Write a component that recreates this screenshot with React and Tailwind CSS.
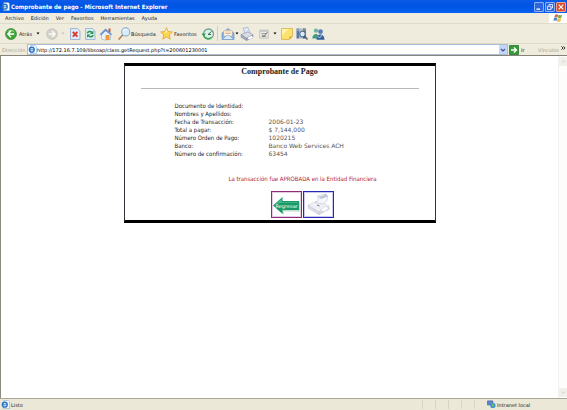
import React from "react";

const MENU = ["Archivo", "Edición", "Ver", "Favoritos", "Herramientas", "Ayuda"];

const ROWS = [
  ["Documento de Identidad:", ""],
  ["Nombres y Apellidos:", ""],
  ["Fecha de Transacción:", "2006-01-23"],
  ["Total a pagar:", "$ 7,144,000"],
  ["Número Orden de Pago:", "1020215"],
  ["Banco:", "Banco Web Services ACH"],
  ["Número de confirmación:", "63454"],
];

function Icon({ children, className = "size-[14px]", box = "0 0 14 14" }) {
  return (
    <svg viewBox={box} className={"shrink-0 " + className} aria-hidden="true">
      {children}
    </svg>
  );
}

function Caret({ className = "text-black" }) {
  return (
    <Icon className={"h-[3px] w-[4px] " + className} box="0 0 4 3">
      <path d="M.5.500h3L2 2.400z" fill="currentColor" />
    </Icon>
  );
}

function IePage({ className = "size-[9px]" }) {
  return (
    <Icon className={className} box="0 0 10 10">
      <path d="M3 .5h5L9.500 2v7.500H3z" fill="#f4f9ff" stroke="#7da3cf" strokeWidth=".6" />
      <circle cx="4.200" cy="5.200" r="2.700" fill="none" stroke="#2675c4" strokeWidth="1.500" />
      <path d="M2 5.300h4.800" stroke="#2675c4" strokeWidth="1" />
    </Icon>
  );
}

function BackIcon() {
  return (
    <Icon className="size-[12px]">
      <circle cx="7" cy="7" r="6.400" fill="#3da535" stroke="#2a7f26" strokeWidth=".7" />
      <path d="M2.500 5A5 5 0 0 1 11.500 5 9 9 0 0 0 2.500 5" fill="#8fd47f" />
      <path d="M7 3.300 3.400 7 7 10.700M3.800 7h7" fill="none" stroke="#fff" strokeWidth="1.700" />
    </Icon>
  );
}

function ForwardIcon() {
  return (
    <Icon className="size-[12px]">
      <circle cx="7" cy="7" r="6.200" fill="#d3d3cb" stroke="#b9b9b0" strokeWidth=".8" />
      <path d="M7 3.500 10.500 7 7 10.500M10 7H3.300" fill="none" stroke="#fbfbf8" strokeWidth="1.700" />
    </Icon>
  );
}

function StopIcon() {
  return (
    <Icon>
      <path d="M2.500 1.500h7l2.500 2.500v8.500H2.500z" fill="#dbe9fa" stroke="#8fa9cf" strokeWidth=".8" />
      <path d="m4.800 4.800 4.600 4.800m0-4.800L4.800 9.600" stroke="#dd3a25" strokeWidth="1.900" />
    </Icon>
  );
}

function RefreshIcon() {
  return (
    <Icon>
      <path d="M2.500 1.500h7l2.500 2.500v8.500H2.500z" fill="#dcedf5" stroke="#8fadcb" strokeWidth=".8" />
      <path d="M4.300 6.300C5 4.300 7.500 4 8.700 5.300" fill="none" stroke="#249548" strokeWidth="1.500" />
      <path d="M10.400 3.600v3.500H7z" fill="#249548" />
      <path d="M10.200 8c-.6 2-3.200 2.400-4.400 1" fill="none" stroke="#249548" strokeWidth="1.500" />
      <path d="M4 10.800V7.400h3.500z" fill="#249548" />
    </Icon>
  );
}

function HomeIcon() {
  return (
    <Icon>
      <path d="M9.500 1.500h2v4h-2z" fill="#c25d35" />
      <path d="M2.500 7 6 3.500 11.500 7v5.500l-6 .5-3-1z" fill="#e9f1fc" stroke="#819fcb" strokeWidth=".5" />
      <path d="M.8 7.200 6.500 1.600l6.700 5.600-1.300 1L6.700 4 2 8.400z" fill="#6a93cf" />
      <path d="M6.500 8h4v5h-4z" fill="#ee9b36" />
    </Icon>
  );
}

function SearchIcon() {
  return (
    <Icon className="size-[13px]">
      <path d="M5.500 8 1.200 13" stroke="#b98150" strokeWidth="1.700" strokeLinecap="round" />
      <circle cx="8.300" cy="5.300" r="4.400" fill="#d5ecfb" stroke="#84abc9" strokeWidth="1.100" />
      <path d="M5.800 4.800C6.300 3 8 2.300 9.500 2.800" fill="none" stroke="#fff" strokeWidth="1.100" />
    </Icon>
  );
}

function StarIcon() {
  return (
    <Icon className="size-[13px]">
      <path
        d="m7 .7 1.900 4.200 4.500.4-3.400 3.100 1 4.700L7 10.700l-4 2.400 1-4.700L.6 5.300l4.500-.4z"
        fill="#fcd650"
        stroke="#d79b25"
        strokeWidth=".7"
      />
      <path d="m7 2.500 1 3-3 1z" fill="#fff3b0" />
    </Icon>
  );
}

function HistoryIcon() {
  return (
    <Icon>
      <circle cx="7.500" cy="7" r="5" fill="#dcefea" stroke="#6aa98c" strokeWidth="1.300" />
      <path d="M7 7.500 10.500 4.500M7 7.500h3" fill="none" stroke="#35704e" strokeWidth="1" />
      <path d="M.5 6.500h4.300L2.700 9.500z" fill="#2c9b4a" />
      <path d="M2.700 8.500c1 3.300 5 4.200 7.600 2" fill="none" stroke="#3ba456" strokeWidth="1.500" />
    </Icon>
  );
}

function MailIcon() {
  return (
    <Icon>
      <path d="M1 6 7 1.500 13 6v6.500H1z" fill="#8bb4e2" stroke="#6288ba" strokeWidth=".6" />
      <path d="M3 3.500h8V9H3z" fill="#fffaf0" stroke="#d0b489" strokeWidth=".5" />
      <path d="M4.300 5h5.500M4.300 6.500h5.500" stroke="#df9b5b" strokeWidth=".7" />
      <path d="m1 12.500 5-4.200h2l5 4.200z" fill="#dceafa" stroke="#6b94c7" strokeWidth=".6" />
    </Icon>
  );
}

function PrintIcon() {
  return (
    <Icon>
      <path d="m3 1 5-.5 2 5-5 1z" fill="#dfe8fa" stroke="#91a5c2" strokeWidth=".6" />
      <path d="m1 7.500 7-2.700 5 3-6.500 3.500z" fill="#dadde5" stroke="#8791a5" strokeWidth=".6" />
      <path d="M1 7.500v2.700l5.500 3.300v-2.200zM6.500 11.300v2.200l6.500-3V7.800z" fill="#a5aec1" stroke="#7f8ba3" strokeWidth=".5" />
      <path d="m7.500 10.800 4-2 1.600 1.700-4 2z" fill="#fff" />
    </Icon>
  );
}

function EditIcon() {
  return (
    <Icon className="size-[12px]">
      <path d="M2 2.500h10v9.500H2z" fill="#ecece6" stroke="#b5b5b0" strokeWidth=".8" />
      <path d="M2 2.500h10v2H2z" fill="#c4c6c6" />
      <path d="M4 6.500h5M4 10h6" stroke="#888" strokeWidth=".9" />
      <path d="m5 8 1.700 2L11 5" fill="none" stroke="#77797b" strokeWidth="1.200" />
    </Icon>
  );
}

function NoteIcon() {
  return (
    <Icon>
      <path d="M1.500 1.500h11v8l-3 3h-8z" fill="#fbe26f" stroke="#d9b548" strokeWidth=".8" />
      <path d="M2 2h7L2 8z" fill="#fff4af" />
      <path d="M12.500 9.500h-3v3z" fill="#cda435" />
    </Icon>
  );
}

function ResearchIcon() {
  return (
    <Icon>
      <path d="M1.500 1.500h3v10h-3z" fill="#5878a9" />
      <path d="M4.800 1.500h2.500v10H4.800z" fill="#9bb4d6" />
      <path d="M7.700 1.500h3v10h-3z" fill="#40557f" />
      <path d="M2 3h2M5.300 3h1.500M8 3h2" stroke="#eee0a0" strokeWidth=".8" />
      <circle cx="7.500" cy="7" r="2.800" fill="#d8ebf8" stroke="#4d6285" strokeWidth="1" />
      <path d="m9.500 9 3 3.500" stroke="#525d77" strokeWidth="1.500" />
    </Icon>
  );
}

function MessengerIcon() {
  return (
    <Icon>
      <circle cx="5" cy="3.600" r="2.200" fill="#6cb6a0" />
      <path d="M1.300 11.500c0-6 7-6 7 0z" fill="#429a80" />
      <circle cx="9.500" cy="4.700" r="2.400" fill="#587fb9" />
      <path d="M5.500 12.700c0-7 8-7 8 0z" fill="#365f9e" />
      <path d="m6.500 9 2 2 2.500-3" fill="none" stroke="#d7f0ef" strokeWidth=".8" />
    </Icon>
  );
}

function ToolButton({ label, children, className }) {
  return (
    <button type="button" aria-label={label} className={"flex shrink-0 items-center " + className}>
      {children}
    </button>
  );
}

function TitleBar() {
  return (
    <header className="flex h-[13px] items-center gap-px bg-linear-to-b from-[#0a5be8] via-[#0054e3] to-[#0861f2] px-px">
      <IePage />
      <h1 className="flex-1 font-['DejaVu_Sans_Condensed','DejaVu_Sans',sans-serif] text-[6px] leading-[12px] font-bold text-white">
        Comprobante de pago - Microsoft Internet Explorer
      </h1>
      <div className="flex gap-px">
        <button type="button" aria-label="Minimizar" className="h-[10px] w-[10px] rounded-[1px] border border-[#8fb0f3] bg-[#2f66dd]">
          <Icon className="size-[8px]" box="0 0 8 8"><path d="M1.500 5.500h3.500v1.300H1.500z" fill="#fff" /></Icon>
        </button>
        <button type="button" aria-label="Restaurar" className="h-[10px] w-[10px] rounded-[1px] border border-[#8fb0f3] bg-[#2f66dd]">
          <Icon className="size-[8px]" box="0 0 8 8">
            <path d="M3 3V1.500h3.500V5H5M1.500 3.300H5v3.200H1.500z" fill="none" stroke="#fff" strokeWidth=".8" />
          </Icon>
        </button>
        <button type="button" aria-label="Cerrar" className="h-[10px] w-[10px] rounded-[1px] border border-[#efa596] bg-[#dc4b2c]">
          <Icon className="size-[8px]" box="0 0 8 8"><path d="m1.700 1.700 4.600 4.600m0-4.600L1.700 6.300" stroke="#fff" strokeWidth="1.200" /></Icon>
        </button>
      </div>
    </header>
  );
}

function MenuBar() {
  return (
    <nav className="flex h-[11px] items-stretch justify-between border-b border-[#e0dccb]">
      <ul className="flex items-center gap-[7px] pl-[5px]">
        {MENU.map((item) => (
          <li key={item} className="flex">
            <button type="button" className="leading-[10px]">{item}</button>
          </li>
        ))}
      </ul>
      <div className="flex w-[18px] items-center justify-center bg-white">
        <Icon className="size-[10px]" box="0 0 12 12">
          <path d="M2.500 2C4 1 5 1.300 6.300 2L5.300 5.500C4 4.800 3 4.700 1.500 5.500z" fill="#e2663b" />
          <path d="M6.800 2.200c1.400.7 2.700.7 4.200-.2L10 5.700c-1.500.8-2.800.7-4.200 0z" fill="#79ad45" />
          <path d="M1.300 6C2.700 5.300 4 5.300 5.200 6l-1 3.700C3 9 2 8.900.3 9.600z" fill="#5284c8" />
          <path d="M5.700 6.200c1.400.7 2.700.8 4.200 0L9 9.800c-1.500.9-2.800.8-4.300 0z" fill="#edbd3d" />
        </Icon>
      </div>
    </nav>
  );
}

function ToolBar() {
  return (
    <div role="toolbar" aria-label="Botones estándar" className="flex h-[20px] items-center border-b border-[#dedac8] pl-[5px]">
      <ToolButton label="Atrás" className="w-[41px] gap-px">
        <BackIcon /><span className="w-[17px] pl-px text-left">Atrás</span><Caret />
      </ToolButton>
      <ToolButton label="Adelante" className="w-[22px] gap-[3px]"><ForwardIcon /><Caret className="text-[#c5c2b5]" /></ToolButton>
      <ToolButton label="Detener" className="w-[15px]"><StopIcon /></ToolButton>
      <ToolButton label="Actualizar" className="w-[16px]"><RefreshIcon /></ToolButton>
      <ToolButton label="Inicio" className="w-[19px]"><HomeIcon /></ToolButton>
      <ToolButton label="Búsqueda" className="w-[42px]"><SearchIcon /><span>Búsqueda</span></ToolButton>
      <ToolButton label="Favoritos" className="w-[41px] gap-px"><StarIcon /><span>Favoritos</span></ToolButton>
      <ToolButton label="Historial" className="w-[16px]"><HistoryIcon /></ToolButton>
      <span className="mr-[3px] h-[15px] w-px bg-[#d3cfbd]" />
      <ToolButton label="Correo" className="w-[19px]"><MailIcon /><Caret /></ToolButton>
      <ToolButton label="Imprimir" className="w-[18px]"><PrintIcon /></ToolButton>
      <ToolButton label="Modificar" className="w-[22px] gap-[3px]"><EditIcon /><Caret /></ToolButton>
      <ToolButton label="Nota" className="w-[15px]"><NoteIcon /></ToolButton>
      <ToolButton label="Referencia" className="w-[16px]"><ResearchIcon /></ToolButton>
      <ToolButton label="Messenger" className="w-[14px]"><MessengerIcon /></ToolButton>
    </div>
  );
}

function AddressBar() {
  return (
    <form className="flex h-[12px] items-center border-b border-[#85837a] pl-[2px]" onSubmit={(e) => e.preventDefault()}>
      <label htmlFor="address" className="w-[25px] text-[#a5a292]">Dirección</label>
      <div className="flex h-[11px] flex-1 items-center border border-[#a9bfd6] bg-white">
        <IePage />
        <input
          id="address"
          type="text"
          defaultValue="http://172.16.7.109/libsoap/class.getRequest.php?t=200601230001"
          className="h-[9px] min-w-0 flex-1 bg-transparent text-black outline-none"
        />
        <button type="button" aria-label="Mostrar direcciones" className="flex h-[9px] w-[8px] items-center justify-center bg-[#c3d5fb]">
          <Icon className="size-[6px]" box="0 0 6 6"><path d="m1 2 2 2 2-2" fill="none" stroke="#3d5685" strokeWidth="1.200" /></Icon>
        </button>
      </div>
      <button type="submit" className="flex w-[30px] items-center gap-[2px] pl-px">
        <Icon className="size-[10px]" box="0 0 10 10">
          <path d="M.5.5h9v9h-9z" fill="#379a38" stroke="#257729" strokeWidth=".8" />
          <path d="M2 5h5M5 2.500 7.500 5 5 7.500" fill="none" stroke="#fff" strokeWidth="1.300" />
        </Icon>
        <span>Ir</span>
      </button>
      <span className="w-[23px] text-[#a5a292]">Vínculos</span>
      <button type="button" aria-label="Más vínculos" className="flex w-[6px] pb-[4px]">
        <Icon className="h-[4px] w-[5px]" box="0 0 6 5"><path d="m.5.5 2 2-2 2m2.500-4 2 2-2 2" fill="none" stroke="#000" strokeWidth="1" /></Icon>
      </button>
    </form>
  );
}

function Receipt() {
  return (
    <section className="w-[312px] border-x border-y-[3px] border-[#33333b] border-y-black text-[6px] leading-[8px]">
      <h2 className="pt-px text-center font-['Liberation_Serif',serif] text-[8px] leading-[10px] font-bold text-[#222]">
        Comprobante de Pago
      </h2>
      <hr className="mx-[16px] mt-[11px] border-[#b9b9b9]" />
      <table className="mt-[13px] ml-[50px] border-collapse text-left">
        <tbody>
          {ROWS.map(([label, value]) => (
            <tr key={label} className="h-[8px]">
              <th scope="row" className="w-[94px] p-0 font-['DejaVu_Sans_Condensed','DejaVu_Sans',sans-serif] font-normal text-[#222]">
                {label}
              </th>
              <td className="p-0 text-[#555]">{value}</td>
            </tr>
          ))}
        </tbody>
      </table>
      <p className="mt-[17px] pl-[46px] text-center font-['DejaVu_Sans_Condensed','DejaVu_Sans',sans-serif] text-[#b3202c]">
        La transacción fue APROBADA en la Entidad Financiera
      </p>
      <div className="mt-[8px] flex justify-center gap-px pb-[2px] pl-[46px]">
        <a href="#regresar" aria-label="Regresar" className="border border-[#8c2b7c] ring-1 ring-[#b04fa4]/30 ring-inset">
          <Icon className="h-[25px] w-[29px]" box="0 0 29 25">
            <path d="m3 15 8-7.500V10h17v9.500H12v3.500z" fill="#c9d9d0" />
            <path d="m1 13.500 9.500-8.500v4H27v9H10.500v4z" fill="#189a67" />
            <path d="m3.500 12.300 6.200-5.500v3.200H26v.8H9z" fill="#4dbb8e" />
            <text x="3.500" y="15.500" fontSize="5" fontFamily="DejaVu Sans, sans-serif" fill="#effff8">Regresar</text>
          </Icon>
        </a>
        <a href="#imprimir" aria-label="Imprimir" className="border border-[#2929b8] ring-1 ring-[#4a4ad0]/30 ring-inset">
          <Icon className="h-[25px] w-[29px]" box="0 0 29 25">
            <path d="m5 16 10 7 11-6-2-3z" fill="#d3d5de" />
            <path d="m4 13 9-4 12 5-10 6z" fill="#f0f0f7" stroke="#c9cbd9" strokeWidth=".5" />
            <path d="m4 13v3l10.500 6.500V20zM15 20v2.500L25 17v-3z" fill="#dadce8" stroke="#c2c4d3" strokeWidth=".4" />
            <path d="M11 10.500c4-1 3.500-4 2.500-6.500L22 2c2.500 3 2 7.500-3 10z" fill="#f6f7fd" stroke="#bcc1d4" strokeWidth=".6" />
            <path d="M13.500 4c2 1.500 6-.5 8.500-2l2 2.500-7 2.500" fill="#bfc5da" />
            <path d="m13 13 2.500 1" stroke="#75798f" strokeWidth="1" />
            <path d="m16 17.500 6-3 3 1.500-5 4z" fill="#fff" stroke="#c5c8d6" strokeWidth=".5" />
          </Icon>
        </a>
      </div>
    </section>
  );
}

function ScrollBar() {
  return (
    <div className="flex w-[9px] flex-col justify-between border-l border-[#f3f2ec] bg-[#fdfdfb] py-px">
      <button type="button" aria-label="Subir" className="flex h-[9px] items-center justify-center bg-[#f1f0ea]">
        <Icon className="size-[5px]" box="0 0 6 6"><path d="m1 4 2-2 2 2" fill="none" stroke="#c9c7ba" /></Icon>
      </button>
      <button type="button" aria-label="Bajar" className="flex h-[9px] items-center justify-center bg-[#f1f0ea]">
        <Icon className="size-[5px]" box="0 0 6 6"><path d="m1 2 2 2 2-2" fill="none" stroke="#c9c7ba" /></Icon>
      </button>
    </div>
  );
}

function StatusBar() {
  return (
    <footer className="flex h-[12px] items-center justify-between border-t border-[#aaa797] bg-[#ebe8d7]">
      <div className="flex items-center gap-px pl-px"><IePage /><span>Listo</span></div>
      <div className="flex h-full items-center">
        {[0, 1, 2, 3, 4].map((n) => (
          <span key={n} className="h-[9px] w-[13px] border-l border-[#d8d4c1]" />
        ))}
        <div className="flex w-[80px] items-center gap-px">
          <Icon className="size-[9px]" box="0 0 10 10">
            <path d="M.5 1h6v4.500h-6z" fill="#5e85d2" stroke="#364f8c" strokeWidth=".6" />
            <circle cx="6.500" cy="6" r="3" fill="#4393d3" />
            <path d="M5 4.500 7 4l1 2-2 2z" fill="#67bf70" />
          </Icon>
          <span>Intranet local</span>
        </div>
      </div>
    </footer>
  );
}

export default function App() {
  return (
    <div className="flex min-h-screen flex-col bg-[#efecde] font-['DejaVu_Sans',sans-serif] text-[5px] leading-[8px] whitespace-nowrap text-[#222]">
      <TitleBar />
      <MenuBar />
      <ToolBar />
      <AddressBar />
      <div className="flex flex-1 border-l border-[#8d8b80] bg-white">
        <main className="flex flex-1 items-start justify-center pt-[7px]"><Receipt /></main>
        <ScrollBar />
      </div>
      <StatusBar />
    </div>
  );
}
